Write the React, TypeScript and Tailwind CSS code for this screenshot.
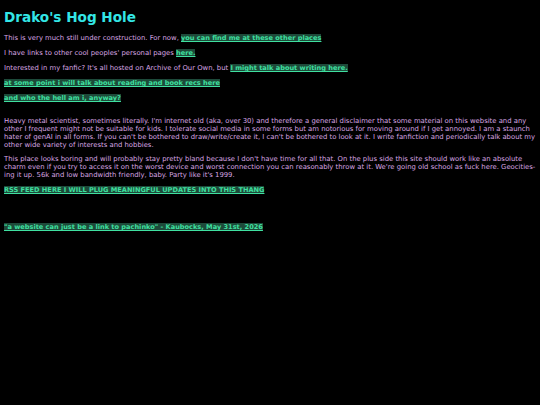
const LINK = "bg-[#1d4a3a] text-[#3fe0a0] text-[6.6px] font-bold underline";

function Hot({ children }: { children: React.ReactNode }) {
  return <a href="#" className={LINK}>{children}</a>;
}

export default function App() {
  return (
    <div className="min-h-[405px] bg-black px-[4px] pt-[8px] font-['DejaVu_Sans',Verdana,sans-serif] text-[6.85px] leading-[8px] text-[#d8a6e2]">
      <h1 className="text-[13.6px] leading-[18px] font-bold text-[#33e6e6]">Drako's Hog Hole</h1>

      <p className="mt-[8px]">
        This is very much still under construction. For now, <Hot>you can find me at these other places</Hot>
      </p>
      <p className="mt-[7px]">
        I have links to other cool peoples' personal pages <Hot>here.</Hot>
      </p>
      <p className="mt-[7px]">
        Interested in my fanfic? It's all hosted on Archive of Our Own, but <Hot>I might talk about writing here.</Hot>
      </p>
      <p className="mt-[7px]">
        <Hot>at some point i will talk about reading and book recs here</Hot>
      </p>
      <p className="mt-[7px]">
        <Hot>and who the hell am i, anyway?</Hot>
      </p>

      <p className="mt-[15px]">
        Heavy metal scientist, sometimes literally. I'm internet old (aka, over 30) and therefore a general disclaimer that some material on this website and any other I frequent might not be suitable for kids. I tolerate social media in some forms but am notorious for moving around if I get annoyed. I am a staunch hater of genAI in all forms. If you can't be bothered to draw/write/create it, I can't be bothered to look at it. I write fanfiction and periodically talk about my other wide variety of interests and hobbies.
      </p>
      <p className="mt-[6px]">
        This place looks boring and will probably stay pretty bland because I don't have time for all that. On the plus side this site should work like an absolute charm even if you try to access it on the worst device and worst connection you can reasonably throw at it. We're going old school as fuck here. Geocities-ing it up. 56k and low bandwidth friendly, baby. Party like it's 1999.
      </p>
      <p className="mt-[7px]">
        <Hot>RSS FEED HERE I WILL PLUG MEANINGFUL UPDATES INTO THIS THANG</Hot>
      </p>
      <p className="mt-[29px]">
        <Hot>"a website can just be a link to pachinko" - Kaubocks, May 31st, 2026</Hot>
      </p>
    </div>
  );
}
